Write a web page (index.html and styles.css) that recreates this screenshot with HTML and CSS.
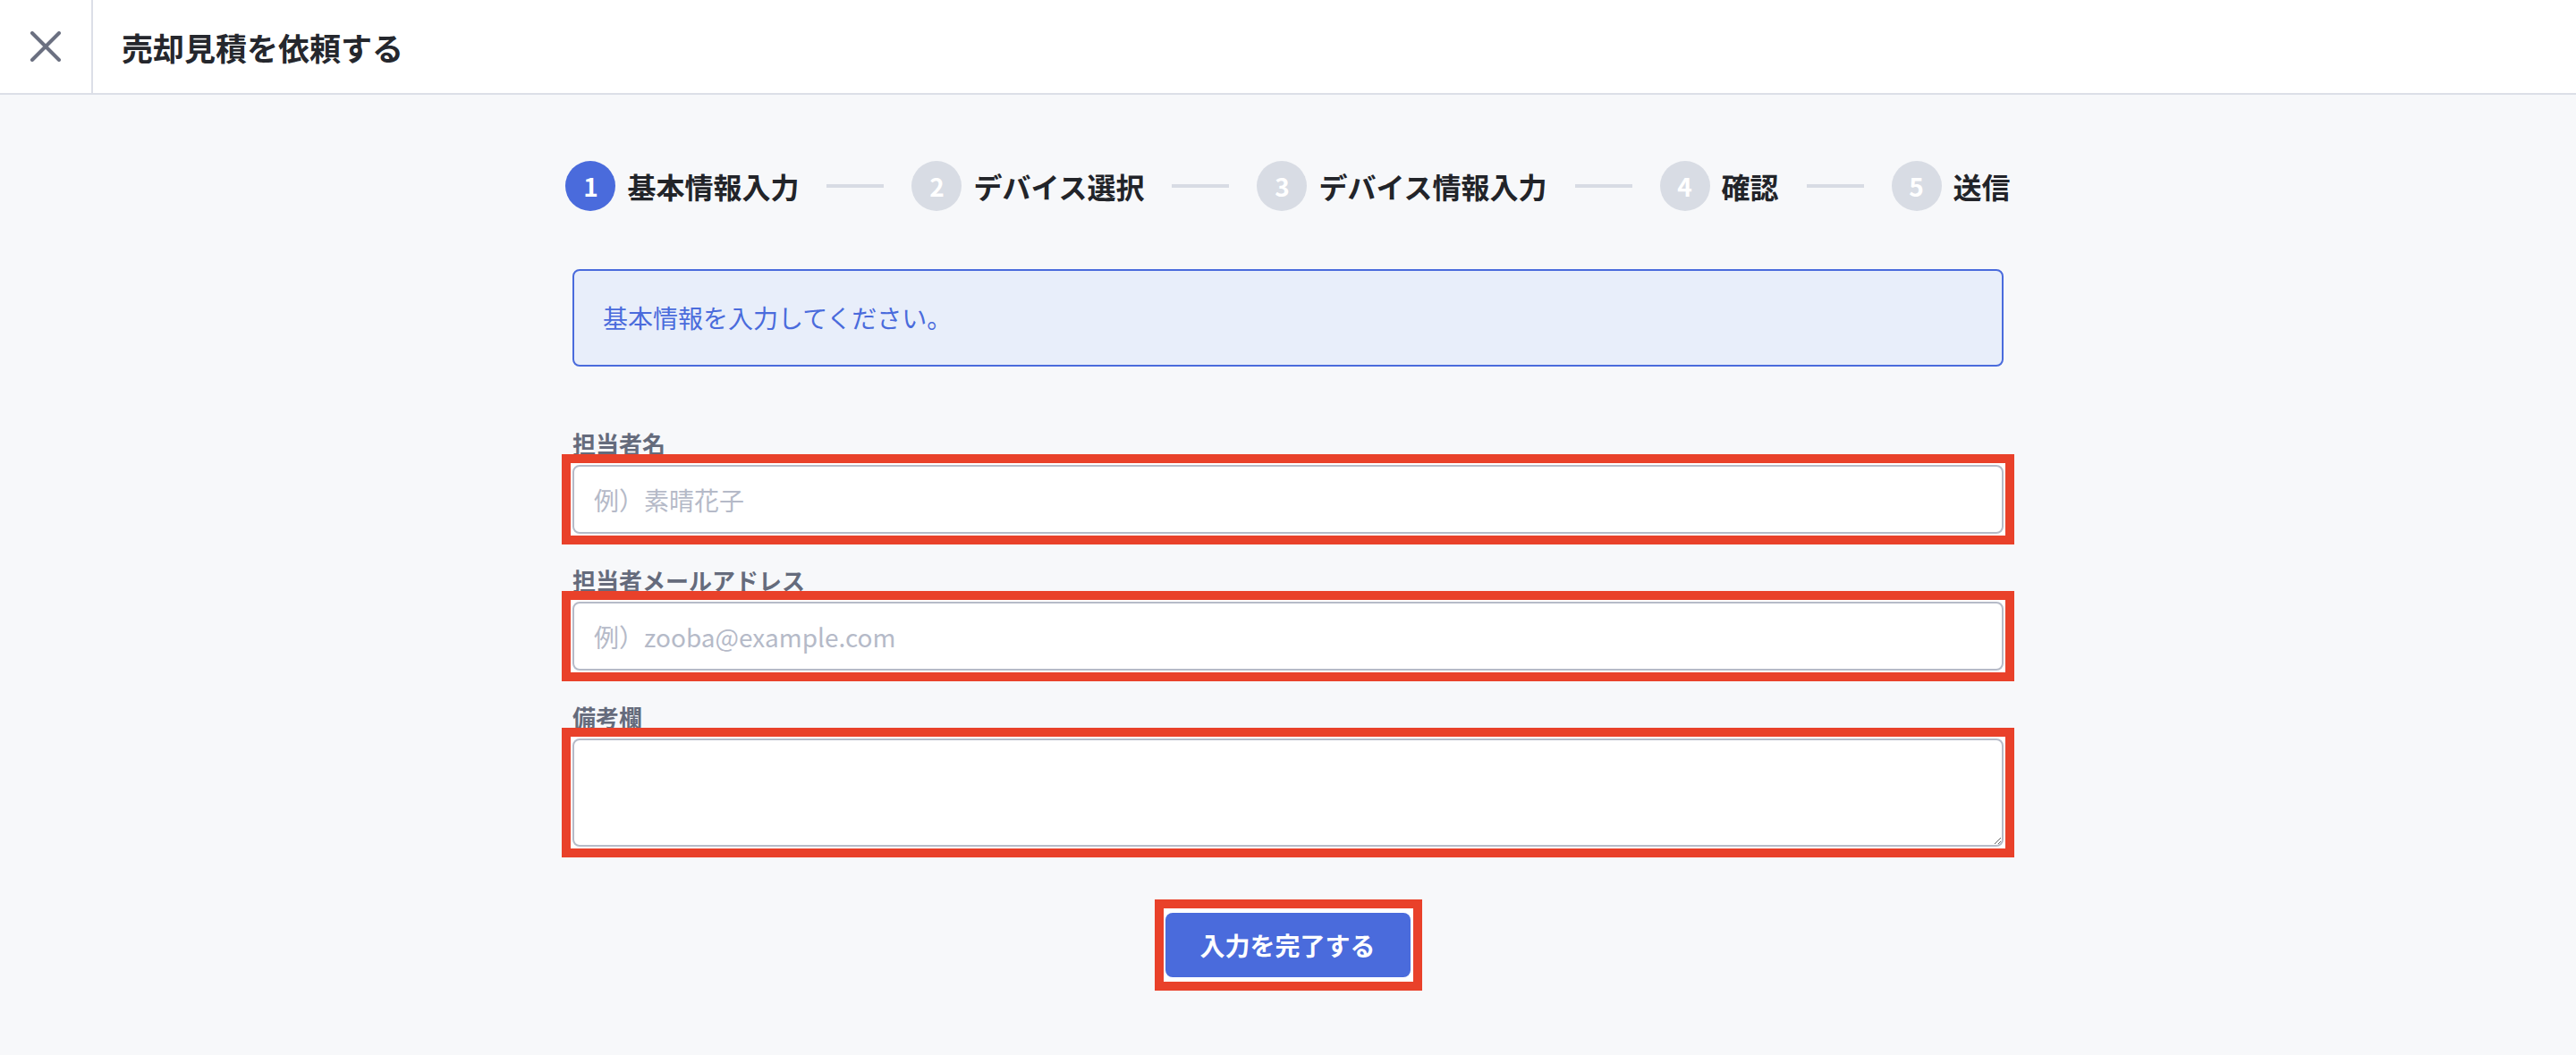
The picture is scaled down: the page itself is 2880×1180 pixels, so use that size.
FILE: index.html
```html
<!DOCTYPE html>
<html lang="ja">
<head>
  <meta charset="UTF-8" />
  <meta name="viewport" content="width=device-width, initial-scale=1.0"/>
  <title>売却見積を依頼する</title>
  <link rel="stylesheet" href="styles.css">
</head>
<body>

  <header class="topbar">
    <button class="close" type="button" aria-label="閉じる">
      <svg width="36" height="34" viewBox="0 0 36 34" fill="none" stroke="#6b7081" stroke-width="4" stroke-linecap="round">
        <path d="M3 2 L33 32 M33 2 L3 32"/>
      </svg>
    </button>
    <h1>売却見積を依頼する</h1>
  </header>

  <main class="wrap">
    <ol class="steps">
      <li class="step active"><span class="num">1</span><span class="label">基本情報入力</span></li>
      <li class="bar"></li>
      <li class="step"><span class="num">2</span><span class="label">デバイス選択</span></li>
      <li class="bar"></li>
      <li class="step"><span class="num">3</span><span class="label">デバイス情報入力</span></li>
      <li class="bar"></li>
      <li class="step"><span class="num">4</span><span class="label">確認</span></li>
      <li class="bar"></li>
      <li class="step"><span class="num">5</span><span class="label">送信</span></li>
    </ol>

    <div class="notice">基本情報を入力してください。</div>

    <form class="form">
      <div class="field">
        <label for="name">担当者名</label>
        <div class="mark"><input id="name" type="text" placeholder="例）素晴花子"></div>
      </div>
      <div class="field">
        <label for="mail">担当者メールアドレス</label>
        <div class="mark"><input id="mail" type="email" placeholder="例）zooba@example.com"></div>
      </div>
      <div class="field">
        <label for="note">備考欄</label>
        <div class="mark"><textarea id="note"></textarea></div>
      </div>
      <div class="actions">
        <div class="mark-btn"><button type="button" class="submit">入力を完了する</button></div>
      </div>
    </form>
  </main>

</body>
</html>
```

FILE: styles.css
```css
body {
  margin: 0;
  min-height: 100vh;
  background: #f7f8fa;
  color: #24262c;
  font-family: "Noto Sans CJK JP", "Noto Sans", sans-serif;
}
.topbar {
  display: flex;
  align-items: center;
  height: 104px;
  background: #fff;
  border-bottom: 2px solid #dcdfe7;
}
.close {
  width: 104px;
  height: 104px;
  padding: 0;
  display: flex;
  align-items: center;
  justify-content: center;
  background: none;
  border: none;
  border-right: 2px solid #dcdfe7;
  box-sizing: border-box;
}
.topbar h1 {
  margin: 0 0 0 32px;
  font-size: 35px;
  font-weight: 700;
  color: #25272d;
}
.wrap {
  width: 1600px;
  margin: 0 auto;
}
.steps {
  list-style: none;
  margin: 74px -20px 0;
  padding: 0;
  display: flex;
  align-items: center;
  justify-content: center;
}
.step {
  display: flex;
  align-items: center;
  gap: 13px;
}
.num {
  width: 56px;
  height: 56px;
  border-radius: 50%;
  background: #d8dce4;
  color: #fff;
  font-size: 28px;
  font-weight: 700;
  display: flex;
  align-items: center;
  justify-content: center;
}
.step.active .num {
  background: #4a6bdc;
}
.label {
  font-size: 32px;
  font-weight: 700;
  color: #222429;
}
.bar {
  width: 64px;
  height: 4px;
  margin: 0 31px;
  background: #d8dce4;
}
.notice {
  margin-top: 65px;
  padding: 36px 32px;
  line-height: 33px;
  font-size: 28px;
  color: #4a6bdc;
  background: #e8eefa;
  border: 2px solid #4a6bdc;
  border-radius: 8px;
}
.form {
  margin-top: 70px;
  display: flex;
  flex-direction: column;
  gap: 36px;
}
.field label {
  display: block;
  font-size: 26px;
  line-height: 32px;
  font-weight: 700;
  color: #656b7c;
  margin-bottom: 8px;
}
.mark {
  position: relative;
  background: #fff;
  box-shadow: 0 0 0 2px #fff, 0 0 0 12px #e9412a;
}
.mark input, .mark textarea {
  display: block;
  width: 100%;
  box-sizing: border-box;
  margin: 0;
  border: 2px solid #b6bbc8;
  border-radius: 8px;
  background: #fff;
  font-family: inherit;
  font-size: 28px;
  color: #24262c;
  padding: 0 22px;
}
.mark input {
  height: 77px;
}
.mark textarea {
  height: 121px;
  padding-top: 16px;
  resize: vertical;
}
.mark input::placeholder {
  color: #b5bac8;
}
.actions {
  display: flex;
  justify-content: center;
  margin-top: 23px;
}
.mark-btn {
  position: relative;
  padding: 5px 3px 5px 2px;
  background: #fff;
  border: 10px solid #e9412a;
}
.submit {
  display: block;
  width: 274px;
  height: 72px;
  border: none;
  border-radius: 8px;
  background: #4a6bdc;
  color: #fff;
  font-family: inherit;
  font-size: 28px;
  font-weight: 700;
}
```
